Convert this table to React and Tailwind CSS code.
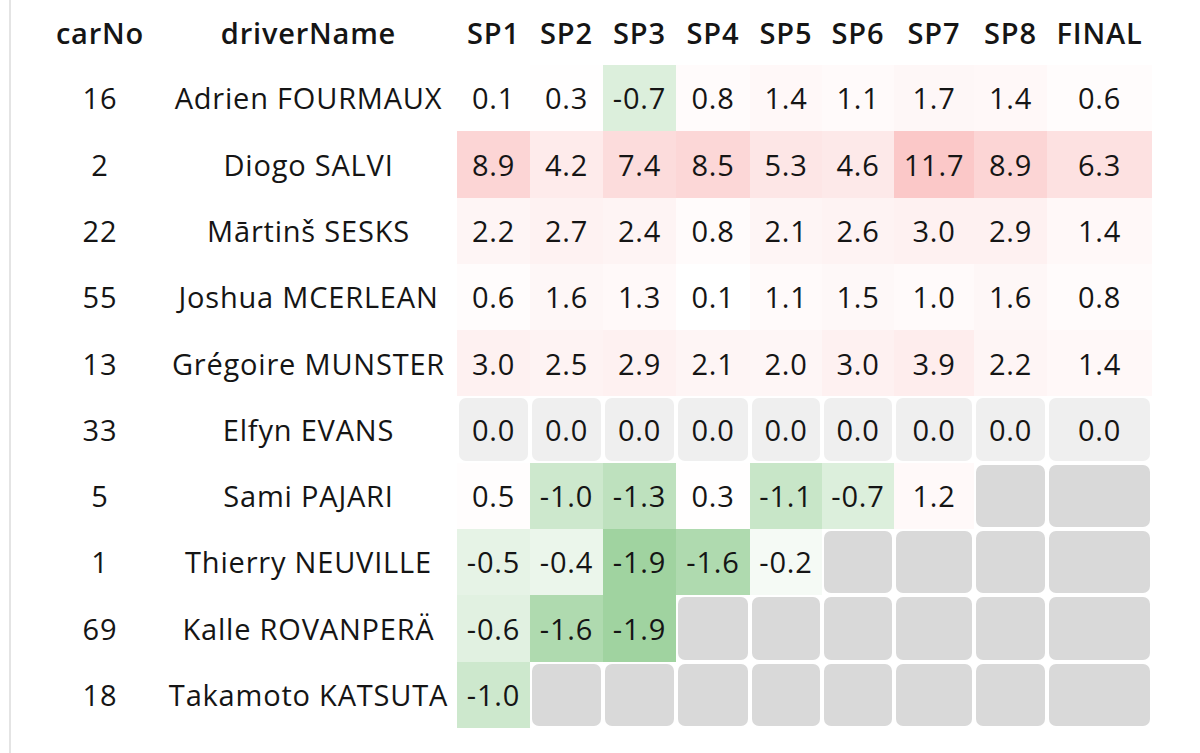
import React from 'react'

const stages = ['SP1', 'SP2', 'SP3', 'SP4', 'SP5', 'SP6', 'SP7', 'SP8', 'FINAL']

const rows = [
  { carNo: 16, driverName: 'Adrien FOURMAUX', times: [0.1, 0.3, -0.7, 0.8, 1.4, 1.1, 1.7, 1.4, 0.6] },
  { carNo: 2, driverName: 'Diogo SALVI', times: [8.9, 4.2, 7.4, 8.5, 5.3, 4.6, 11.7, 8.9, 6.3] },
  { carNo: 22, driverName: 'Mārtinš SESKS', times: [2.2, 2.7, 2.4, 0.8, 2.1, 2.6, 3.0, 2.9, 1.4] },
  { carNo: 55, driverName: 'Joshua MCERLEAN', times: [0.6, 1.6, 1.3, 0.1, 1.1, 1.5, 1.0, 1.6, 0.8] },
  { carNo: 13, driverName: 'Grégoire MUNSTER', times: [3.0, 2.5, 2.9, 2.1, 2.0, 3.0, 3.9, 2.2, 1.4] },
  { carNo: 33, driverName: 'Elfyn EVANS', times: [0, 0, 0, 0, 0, 0, 0, 0, 0] },
  { carNo: 5, driverName: 'Sami PAJARI', times: [0.5, -1.0, -1.3, 0.3, -1.1, -0.7, 1.2, null, null] },
  { carNo: 1, driverName: 'Thierry NEUVILLE', times: [-0.5, -0.4, -1.9, -1.6, -0.2, null, null, null, null] },
  { carNo: 69, driverName: 'Kalle ROVANPERÄ', times: [-0.6, -1.6, -1.9, null, null, null, null, null, null] },
  { carNo: 18, driverName: 'Takamoto KATSUTA', times: [-1.0, null, null, null, null, null, null, null, null] },
]

// white -> red for time lost, white -> green for time gained
function cellColour(v) {
  const mix = (to, t) => {
    const c = to.map((x) => Math.round(255 - (255 - x) * t))
    return `rgb(${c[0]}, ${c[1]}, ${c[2]})`
  }
  if (v > 0) return mix([251, 200, 200], Math.min(1, v / 11.7))
  return mix([160, 211, 160], Math.min(1, -v / 1.9))
}

const grid = 'grid grid-cols-[120px_297px_73px_73px_73px_74px_72px_72px_80px_73px_105px]'

function Cell({ v }) {
  if (v === null) {
    return (
      <div className="p-[2px]">
        <div className="h-full rounded-[7px] bg-[#d9d9d9]" />
      </div>
    )
  }
  if (v === 0) {
    return (
      <div className="p-[2px]">
        <div className="h-full rounded-[7px] bg-[#efefef] flex items-center justify-center">0.0</div>
      </div>
    )
  }
  return (
    <div className="flex items-center justify-center" style={{ backgroundColor: cellColour(v) }}>
      {v.toFixed(1)}
    </div>
  )
}

export default function App() {
  return (
    <div className="h-[753px] bg-white text-[#151515] font-['Open_Sans',sans-serif] text-[29px] tracking-[0.8px]">
      <div className="ml-[9px] h-full border-l-2 border-[#e4e4e4] pl-[29px]">
        <div className={`${grid} h-[65px] items-center text-center font-semibold`}>
          <div>carNo</div>
          <div>driverName</div>
          {stages.map((s) => (
            <div key={s}>{s}</div>
          ))}
        </div>

        {rows.map((r) => (
          <div key={r.carNo} className={`${grid} h-[66.3px] text-center`}>
            <div className="flex items-center justify-center">{r.carNo}</div>
            <div className="flex items-center justify-center whitespace-nowrap">{r.driverName}</div>
            {r.times.map((v, i) => (
              <Cell key={i} v={v} />
            ))}
          </div>
        ))}
      </div>
    </div>
  )
}
